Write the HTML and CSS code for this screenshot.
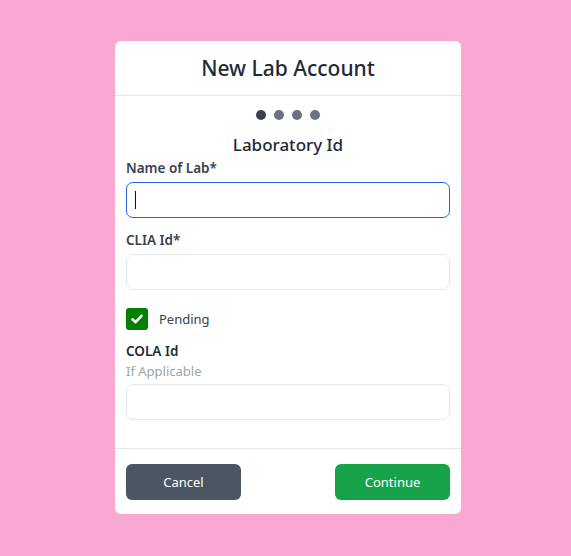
FILE: index.html
```html
<!DOCTYPE html>
<html>
<head>
<meta charset="utf-8">
<link rel="stylesheet" href="styles.css">
</head>
<body>
<div class="card">
  <div class="card-header">
    <h1 class="title">New Lab Account</h1>
  </div>
  <div class="card-body">
    <div class="dots">
      <span class="dot active"></span>
      <span class="dot"></span>
      <span class="dot"></span>
      <span class="dot"></span>
    </div>
    <h2 class="step-title">Laboratory Id</h2>
    <label class="label">Name of Lab*</label>
    <div class="input focused"><span class="caret"></span></div>
    <label class="label label-gap">CLIA Id*</label>
    <div class="input"></div>
    <div class="check-row">
      <span class="checkbox">
        <svg width="14" height="14" viewBox="0 0 14 14"><path d="M2.5 7.3 L5.6 10.2 L11.5 3.8" fill="none" stroke="#fff" stroke-width="2.6" stroke-linecap="round" stroke-linejoin="round"/></svg>
      </span>
      <span class="check-label">Pending</span>
    </div>
    <label class="label label-cola">COLA Id</label>
    <div class="hint">If Applicable</div>
    <div class="input"></div>
  </div>
  <div class="card-footer">
    <button class="btn btn-cancel">Cancel</button>
    <button class="btn btn-continue">Continue</button>
  </div>
</div>
</body>
</html>
```

FILE: styles.css
```css
* { box-sizing: border-box; }
html, body { margin: 0; padding: 0; }
body {
  background: #f9a8d4;
  font-family: "Noto Sans", "Open Sans", sans-serif;
  color: #1f2937;
  display: flex;
  justify-content: center;
  min-height: 556px;
  padding-left: 5px;
}
.card {
  width: 346px;
  margin-top: 41px;
  align-self: flex-start;
  background: #fff;
  border-radius: 6px;
}
.card-header {
  height: 55px;
  border-bottom: 1px solid #e5e7eb;
  display: flex;
  align-items: center;
  justify-content: center;
}
.title {
  margin: 0;
  font-size: 21px;
  font-weight: 500;
  color: #1f2937;
  line-height: 28px;
}
.card-body {
  padding: 14px 11px 28px;
  display: flex;
  flex-direction: column;
}
.dots {
  display: flex;
  justify-content: center;
  gap: 8px;
  height: 10px;
}
.dot {
  width: 10px;
  height: 10px;
  border-radius: 50%;
  background: #6b7280;
}
.dot.active { background: #374151; }
.step-title {
  margin: 13px 0 0;
  text-align: center;
  font-size: 17px;
  font-weight: 500;
  line-height: 24px;
  color: #1f2937;
}
.label {
  display: block;
  font-size: 13.5px;
  font-weight: 600;
  line-height: 20px;
  color: #374151;
  margin-top: 1px;
}
.label-gap { margin-top: 12px; }
.input {
  margin-top: 4px;
  height: 36px;
  border: 1px solid #e5e7eb;
  border-radius: 7px;
  display: flex;
  align-items: center;
}
.input.focused {
  border-color: #2563eb;
}
.caret {
  margin-left: 8px;
  width: 1px;
  height: 18px;
  background: #111;
}
.check-row {
  margin-top: 18px;
  display: flex;
  align-items: center;
  height: 22px;
}
.checkbox {
  width: 22px;
  height: 22px;
  border-radius: 3px;
  background: #008000;
  display: flex;
  align-items: center;
  justify-content: center;
}
.check-label {
  margin-left: 11px;
  font-size: 13px;
  color: #374151;
}
.label-cola { margin-top: 11px; color: #1f2937; }
.hint {
  font-size: 13px;
  line-height: 20px;
  color: #9ca3af;
}
.input:last-child { margin-top: 3px; }
.card-footer {
  border-top: 1px solid #e5e7eb;
  padding: 15px 11px 14px;
  display: flex;
  justify-content: space-between;
}
.btn {
  width: 115px;
  height: 36px;
  border: none;
  border-radius: 6px;
  color: #fff;
  font-family: "Noto Sans", "Open Sans", sans-serif;
  font-size: 13px;
}
.btn-cancel { background: #4b5563; }
.btn-continue { background: #16a34a; }
```
